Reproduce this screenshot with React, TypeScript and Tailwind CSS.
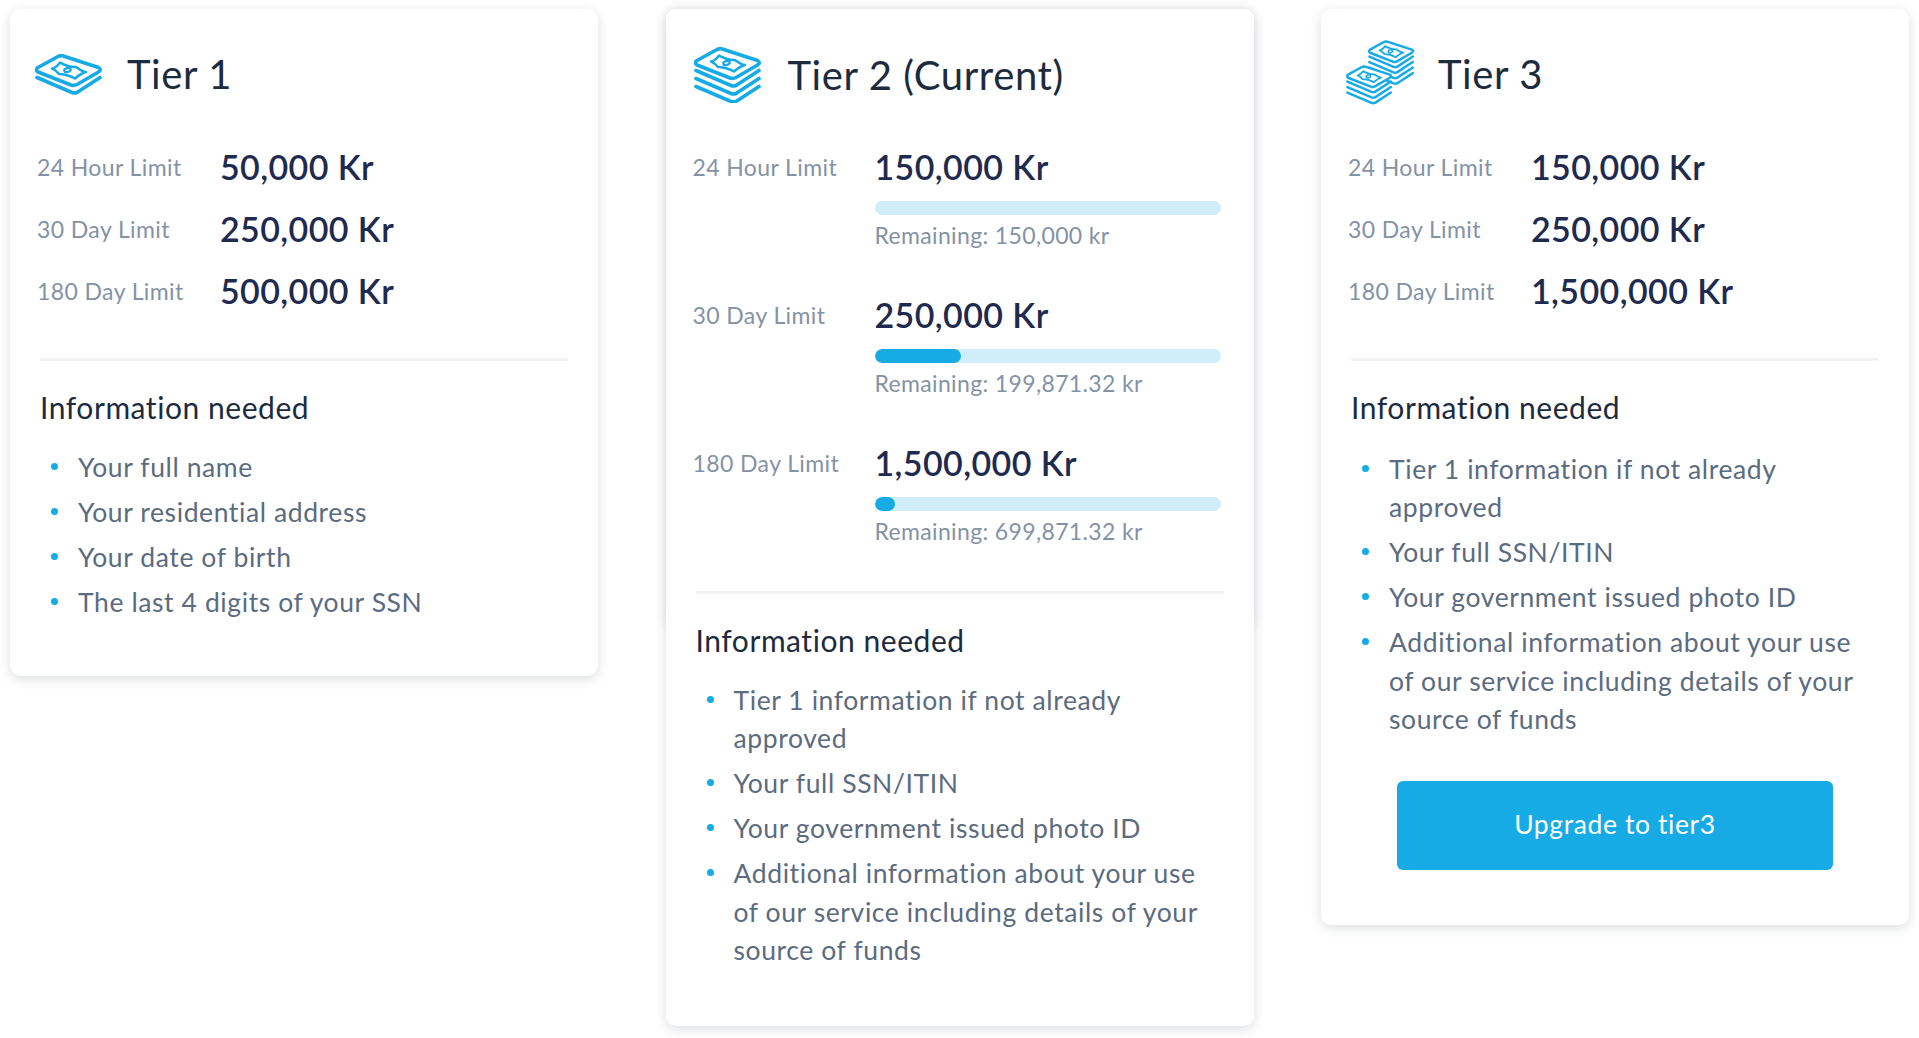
import React from "react";

type Limit = { label: string; value: string; remaining?: string; used?: number };

const blue = "#16abe5";

const shortInfo = [
  "Your full name",
  "Your residential address",
  "Your date of birth",
  "The last 4 digits of your SSN",
];

const longInfo = [
  "Tier 1 information if not already\napproved",
  "Your full SSN/ITIN",
  "Your government issued photo ID",
  "Additional information about your use\nof our service including details of your\nsource of funds",
];

// one bank note seen from above, plus the edges of the notes below it
function Bills({ layers, x = 0, y = 0, s = 1 }: { layers: number; x?: number; y?: number; s?: number }) {
  const chevrons = Array.from({ length: layers }, (_, i) => i);
  return (
    <g transform={`translate(${x} ${y}) scale(${s})`} strokeLinejoin="round" strokeLinecap="round" fill="none">
      {chevrons.map((i) => (
        <path key={i} d={`M2 ${22.5 + i * 8}L37 ${37.5 + i * 8}Q39.5 ${38.5 + i * 8} 42 ${37.5 + i * 8}L65 ${22.5 + i * 8}`} />
      ))}
      <path
        d="M3 12.5L23 1.5Q26 0 29 1.2L63.5 12.5Q67 14.5 63.5 17L42 29.5Q39 31 36 30L3 17Q0 14.8 3 12.5Z"
        fill="#fff"
      />
      <path d="M17 13.5C21 13 23 10 25 7.5C28 9.5 36 12.5 41 12C44 14 47 16.5 51 17C47 18 44 20 40 23.5C36 21 28 19 24 19C22 16.5 20 14.5 17 13.5Z" strokeWidth={2.6} />
      <ellipse cx="32.5" cy="15" rx="3.3" ry="2" transform="rotate(-15 32.5 15)" strokeWidth={2.2} />
    </g>
  );
}

function TierOneIcon() {
  return (
    <svg className="mt-[5px]" width="68" height="42" viewBox="0 0 68 42" stroke={blue} strokeWidth={3.6}>
      <Bills layers={1} y={1} />
    </svg>
  );
}

function TierTwoIcon() {
  return (
    <svg className="mt-[5px]" width="70" height="56" viewBox="0 0 70 56" stroke={blue} strokeWidth={3.6}>
      <Bills layers={3} y={1} />
    </svg>
  );
}

function TierThreeIcon() {
  return (
    <svg width="72" height="66" viewBox="0 0 72 66" stroke={blue} strokeWidth={3.6}>
      <Bills layers={4} x={23} y={1} s={0.69} />
      <Bills layers={3} x={1} y={26} s={0.69} />
    </svg>
  );
}

function LimitRow({ limit, labelWidth }: { limit: Limit; labelWidth: string }) {
  return (
    <div className="flex">
      <div className={`${labelWidth} shrink-0 text-[23px] leading-[62px] tracking-[0.4px] text-[#8492a6]`}>{limit.label}</div>
      <div className="flex-1">
        <div className="text-[34px] leading-[61px] pb-[1px] tracking-[0.4px] font-semibold text-[#1f2a4f]">{limit.value}</div>
        {limit.remaining && (
          <>
            <div className="mt-[3px] h-[14px] overflow-hidden rounded-[7px] bg-[#d0eefa]">
              <div className="h-full rounded-[7px] bg-[#16abe5]" style={{ width: `${limit.used}%` }} />
            </div>
            <div className="mt-[6px] h-[63px] text-[23px] leading-[28px] tracking-[0.35px] text-[#8492a6]">{limit.remaining}</div>
          </>
        )}
      </div>
    </div>
  );
}

function InfoList({ items, className }: { items: string[]; className: string }) {
  return (
    <ul className={`flex flex-col gap-[6.6px] ${className}`}>
      {items.map((item) => (
        <li key={item} className="flex text-[26.5px] leading-[38.4px] tracking-[0.6px] text-[#5b6b80]">
          <span className="mt-[15px] ml-[11px] mr-[20px] h-[7px] w-[7px] shrink-0 rounded-full bg-[#16abe5]" />
          <span className="whitespace-pre-line">{item}</span>
        </li>
      ))}
    </ul>
  );
}

function Card({
  title,
  icon,
  limits,
  info,
  titleClass,
  headingClass,
  dividerClass,
  listClass,
  labelWidth,
  children,
  className,
}: {
  title: string;
  icon: React.ReactNode;
  limits: Limit[];
  info: string[];
  titleClass: string;
  headingClass: string;
  dividerClass: string;
  listClass: string;
  labelWidth: string;
  children?: React.ReactNode;
  className: string;
}) {
  return (
    <section className={`relative w-[588px] shrink-0 rounded-[10px] bg-white shadow-[0_3px_12px_rgba(40,50,70,0.16)] ${className}`}>
      <header className={`flex h-[127px] items-center ${titleClass}`}>
        {icon}
        <h2 className={`text-[40px] leading-[46px] tracking-[0.6px] font-normal text-[#1c2b3e] ${headingClass}`}>{title}</h2>
      </header>
      <div className="pl-[27px] pr-[33px]">
        {limits.map((limit) => (
          <LimitRow key={limit.label} limit={limit} labelWidth={labelWidth} />
        ))}
      </div>
      <div className={`mx-[30px] h-[3px] bg-[#f1f3f6] ${dividerClass}`} />
      <div className="px-[30px]">
        <h3 className="mt-[28px] text-[30px] leading-[36px] tracking-[0.55px] font-normal text-[#1c2b3e]">Information needed</h3>
        <InfoList items={info} className={listClass} />
        {children}
      </div>
    </section>
  );
}

export default function App() {
  return (
    <div className="isolate min-h-screen bg-white font-['Lato','Liberation_Sans',sans-serif]">
      <div className="flex items-start gap-[67.5px] pl-[10px] pt-[9px]">
        <Card
          title="Tier 1"
          icon={<TierOneIcon />}
          titleClass="gap-[24px] pl-[25px]"
          headingClass="pt-[2px]"
          dividerClass="mt-[36px]"
          listClass="mt-[23px]"
          labelWidth="w-[183px]"
          className="h-[667px]"
          info={shortInfo}
          limits={[
            { label: "24 Hour Limit", value: "50,000 Kr" },
            { label: "30 Day Limit", value: "250,000 Kr" },
            { label: "180 Day Limit", value: "500,000 Kr" },
          ]}
        />
        <Card
          title="Tier 2 (Current)"
          icon={<TierTwoIcon />}
          titleClass="gap-[24px] pl-[28px]"
          headingClass="pt-[5px]"
          dividerClass="mt-[11px]"
          listClass="mt-[23px]"
          labelWidth="w-[182px]"
          className="h-[1017px]"
          info={longInfo}
          limits={[
            { label: "24 Hour Limit", value: "150,000 Kr", used: 0, remaining: "Remaining: 150,000 kr" },
            { label: "30 Day Limit", value: "250,000 Kr", used: 25, remaining: "Remaining: 199,871.32 kr" },
            { label: "180 Day Limit", value: "1,500,000 Kr", used: 6, remaining: "Remaining: 699,871.32 kr" },
          ]}
        >
          {/* the upper part of this card throws a slightly stronger shadow */}
          <div className="absolute inset-x-0 top-0 -z-10 h-[620px] rounded-[10px] shadow-[0_0_12px_rgba(40,50,70,0.1)]" />
        </Card>
        <Card
          title="Tier 3"
          icon={<TierThreeIcon />}
          titleClass="gap-[21px] pl-[24px]"
          headingClass="pt-[2px]"
          dividerClass="mt-[36px]"
          listClass="mt-[25px]"
          labelWidth="w-[183px]"
          className="h-[916px]"
          info={longInfo}
          limits={[
            { label: "24 Hour Limit", value: "150,000 Kr" },
            { label: "30 Day Limit", value: "250,000 Kr" },
            { label: "180 Day Limit", value: "1,500,000 Kr" },
          ]}
        >
          <button className="mx-auto mt-[42px] flex h-[89px] w-[436px] items-center justify-center rounded-[6px] bg-[#16abe5] text-[26.5px] tracking-[0.6px] text-white">
            Upgrade to tier3
          </button>
        </Card>
      </div>
    </div>
  );
}
